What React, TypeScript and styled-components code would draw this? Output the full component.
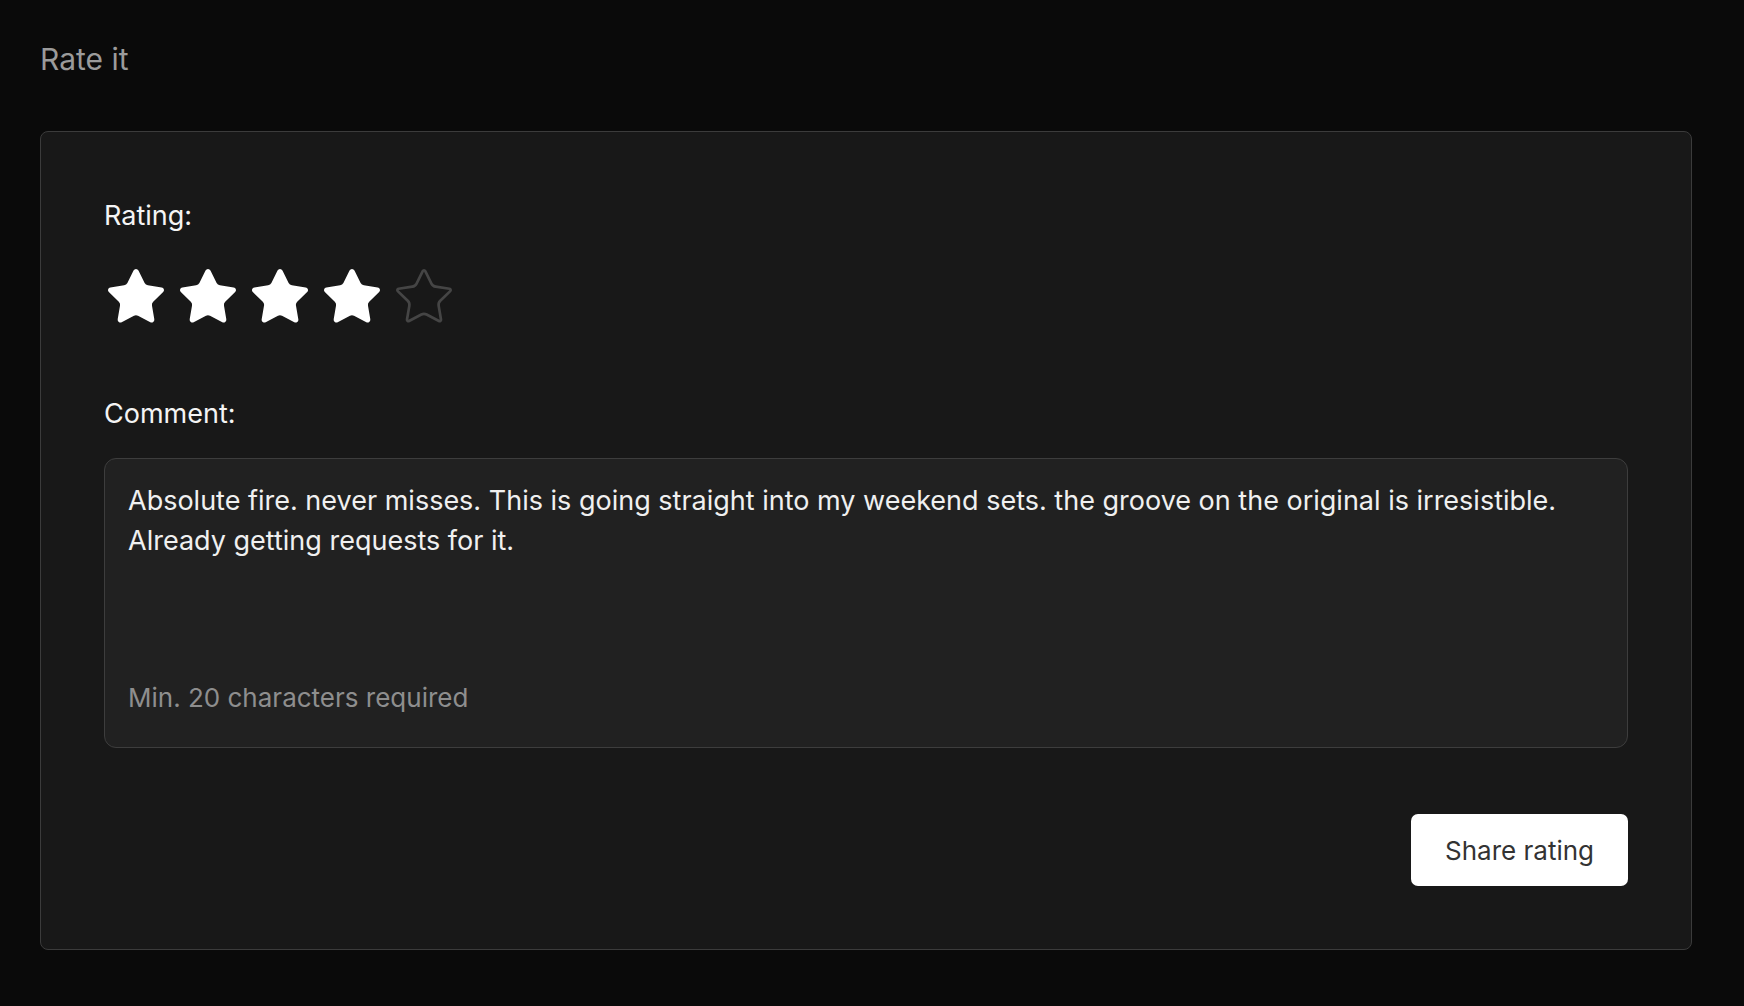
import React from 'react';
import styled, { createGlobalStyle } from 'styled-components';
import { Star } from 'lucide-react';

const GlobalStyle = createGlobalStyle`
  html, body {
    margin: 0;
    padding: 0;
    background: #0a0a0a;
  }
  body {
    font-family: Inter, "Noto Sans", "Liberation Sans", sans-serif;
    -webkit-font-smoothing: antialiased;
  }
`;

const comment =
  'Absolute fire. never misses. This is going straight into my weekend sets. the groove on the original is irresistible. Already getting requests for it.';

const RatingForm = () => {
  const rating = 4;

  return (
    <Page>
      <Heading>Rate it</Heading>
      <Card>
        <Field>
          <Label>Rating:</Label>
          <StarRow>
            {[1, 2, 3, 4, 5].map(n => (
              <StarButton key={n} type="button" aria-label={`${n} stars`}>
                <Star
                  size={64}
                  strokeWidth={1}
                  color={n <= rating ? '#ffffff' : '#454545'}
                  fill={n <= rating ? '#ffffff' : 'none'}
                />
              </StarButton>
            ))}
          </StarRow>
        </Field>
        <Field spaced>
          <Label>Comment:</Label>
          <CommentBox>
            <CommentInput defaultValue={comment} />
            <Hint>Min. 20 characters required</Hint>
          </CommentBox>
        </Field>
        <Actions>
          <SubmitButton type="button">Share rating</SubmitButton>
        </Actions>
      </Card>
    </Page>
  );
};

const Page = styled.div`
  min-height: 1006px;
  box-sizing: border-box;
  padding: 40px 52px 40px 40px;
  background: #0a0a0a;
`;

const Heading = styled.h2`
  margin: 0;
  font-size: 30px;
  line-height: 38px;
  font-weight: 400;
  color: #9b9b9b;
`;

const Card = styled.div`
  margin-top: 53px;
  width: 1652px;
  box-sizing: border-box;
  background: #181818;
  border: 1px solid #3b3b3b;
  border-radius: 8px;
  padding: 64px 63px 63px 63px;
  display: flex;
  flex-direction: column;
`;

const Field = styled.div<{ spaced?: boolean }>`
  display: flex;
  flex-direction: column;
  margin-top: ${props => (props.spaced ? '65px' : '0')};
`;

const Label = styled.label`
  font-size: 27px;
  line-height: 39px;
  font-weight: 400;
  color: #f4f4f4;
`;

const StarRow = styled.div`
  display: flex;
  gap: 8px;
  margin-top: 30px;
`;

const StarButton = styled.button`
  display: flex;
  padding: 0;
  border: 0;
  background: none;
  cursor: pointer;
`;

const CommentBox = styled.div`
  margin-top: 25px;
  height: 290px;
  box-sizing: border-box;
  display: flex;
  flex-direction: column;
  background: #212121;
  border: 1px solid #3d3d3d;
  border-radius: 12px;
  padding: 22px 24px 33px 23px;
`;

const CommentInput = styled.textarea`
  flex: 1;
  margin: 0;
  padding: 0;
  border: 0;
  outline: none;
  resize: none;
  background: transparent;
  font-family: inherit;
  font-size: 27px;
  line-height: 40px;
  color: #f0f0f0;
  overflow: hidden;
`;

const Hint = styled.div`
  font-size: 26px;
  line-height: 32px;
  color: #8e8e8e;
`;

const Actions = styled.div`
  display: flex;
  justify-content: flex-end;
  margin-top: 66px;
`;

const SubmitButton = styled.button`
  height: 72px;
  padding: 0 34px;
  border: 0;
  border-radius: 7px;
  background: #ffffff;
  color: #333333;
  font-family: inherit;
  font-size: 26px;
  cursor: pointer;
`;

export default function App() {
  return (
    <>
      <GlobalStyle />
      <RatingForm />
    </>
  );
}
